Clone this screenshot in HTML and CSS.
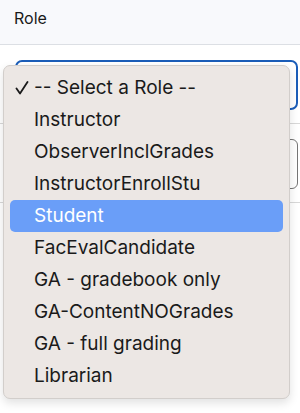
FILE: index.html
```html
<!DOCTYPE html>
<html lang="en">
<head>
  <meta charset="UTF-8" />
  <meta name="viewport" content="width=device-width, initial-scale=1.0"/>
  <title>Role</title>
  <link rel="stylesheet" href="styles.css">
</head>
<body>

  <header class="panel-head">Role</header>

  <section class="panel-body">
    <div class="field">
      <div class="select focused"></div>
    </div>
    <div class="field">
      <div class="select"></div>
    </div>
  </section>

  <ul class="menu">
    <li>
      <svg class="check" width="14" height="14" viewBox="0 0 14 14">
        <path d="M1.5 7.5 L5 12.5 L12.5 1" fill="none" stroke="#1a1a1a" stroke-width="1.8" stroke-linecap="round" stroke-linejoin="round"/>
      </svg>
      -- Select a Role --
    </li>
    <li>Instructor</li>
    <li>ObserverInclGrades</li>
    <li>InstructorEnrollStu</li>
    <li class="active">Student</li>
    <li>FacEvalCandidate</li>
    <li>GA - gradebook only</li>
    <li>GA-ContentNOGrades</li>
    <li>GA - full grading</li>
    <li>Librarian</li>
  </ul>

</body>
</html>
```

FILE: styles.css
```css
body {
  margin: 0;
  font-family: Inter, "Liberation Sans", Arial, sans-serif;
  background: #fff;
  color: #1a1a1a;
  position: relative;
  height: 413px;
  overflow: hidden;
}

.panel-head {
  height: 45px;
  box-sizing: border-box;
  padding: 8px 14px 0;
  font-size: 16px;
  line-height: 20px;
  background: #f8f9fc;
  border-bottom: 1px solid #dcdfe4;
}

.field {
  padding: 15px 2px 13px 15px;
  border-bottom: 1px solid #d8d8d8;
}

.select {
  height: 48px;
  border: 1px solid #767676;
  border-radius: 6px;
}

.select.focused {
  height: 46px;
  border: 2px solid #1b5db8;
  border-radius: 7px;
}

.menu {
  position: absolute;
  top: 65px;
  left: 3px;
  width: 285px;
  margin: 0;
  padding: 6px 0;
  list-style: none;
  background: #ece7e4;
  border: 1px solid #d2cecb;
  border-radius: 7px;
  box-shadow: 0 4px 10px rgba(0, 0, 0, 0.12);
}

.menu li {
  position: relative;
  margin: 0 6px;
  padding-left: 24px;
  height: 32px;
  line-height: 32px;
  font-size: 19px;
  border-radius: 5px;
}

.check {
  position: absolute;
  left: 5px;
  top: 9px;
}

.menu li.active {
  background: #6a9ef8;
  color: #fff;
}
```
